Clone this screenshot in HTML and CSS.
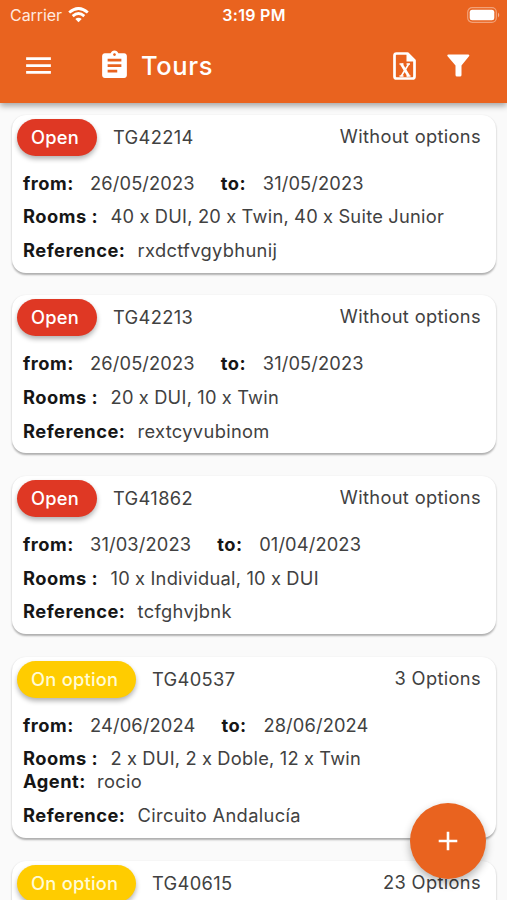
FILE: index.html
```html
<!DOCTYPE html>
<html lang="en">
<head>
<meta charset="utf-8">
<title>Tours</title>
<link rel="stylesheet" href="styles.css">
</head>
<body>
<div class="screen">
  <header class="top">
    <div class="status">
      <div class="carrier"><span>Carrier</span>
        <svg class="wifi" width="21" height="16" viewBox="0 0 21 16" fill="none" stroke="#fff" stroke-width="2.8"><path d="M1.200 5.500Q10.500-2.600 19.800 5.500M4.700 9.100Q10.500 4 16.300 9.100"/><path d="M10.500 15.200L7.300 12Q10.500 9.500 13.700 12Z" fill="#fff" stroke="none"/></svg>
      </div>
      <span class="time">3:19 PM</span>
      <svg class="battery" width="33" height="16" viewBox="0 0 33 16"><rect x=".7" y=".7" width="28.600" height="14.600" rx="4.500" fill="none" stroke="#fff" stroke-opacity=".4" stroke-width="1.200"/><rect x="2.700" y="2.700" width="24.600" height="10.600" rx="2.500" fill="#fff"/><path d="M31 5.500Q33.500 8 31 10.500Z" fill="#fff" fill-opacity=".5"/></svg>
    </div>
    <div class="bar">
      <svg class="menu" width="33" height="33" viewBox="0 0 24 24" fill="#fff"><path d="M3 18h18v-2H3v2zm0-5h18v-2H3v2zm0-7v2h18V6H3z"/></svg>
      <svg class="clip" width="33" height="33" viewBox="0 0 24 24" fill="#fff"><path d="M19 3h-4.180C14.400 1.840 13.300 1 12 1c-1.300 0-2.400.84-2.820 2H5c-1.100 0-2 .9-2 2v14c0 1.100.9 2 2 2h14c1.100 0 2-.9 2-2V5c0-1.100-.9-2-2-2zm-7 0c.55 0 1 .45 1 1s-.45 1-1 1-1-.45-1-1 .45-1 1-1zm2 14H7v-2h7v2zm3-4H7v-2h10v2zm0-4H7V7h10v2z"/></svg>
      <h1>Tours</h1>
      <svg class="excel" width="23" height="28" viewBox="0 0 23 28"><path d="M3.500 1.500H14.500L21.500 8.500V24.500Q21.500 26.500 19.500 26.500H3.500Q1.500 26.500 1.500 24.500V3.500Q1.500 1.500 3.500 1.500Z" fill="none" stroke="#fff" stroke-width="2.700" stroke-linejoin="round"/><path d="M13.500 1.500V9.500H21.500Z" fill="#fff"/><path d="M8.300 12L15.700 24" stroke="#fff" stroke-width="2.700"/><path d="M15.700 12L8.300 24" stroke="#fff" stroke-width="1.600"/><path d="M6.500 12H10.500M13.500 12H17M6.500 24H10.500M13.500 24H17.500" stroke="#fff" stroke-width="1.400"/></svg>
      <svg class="filter" width="23" height="23" viewBox="0 0 23 23"><path d="M1.500.5H21Q23 .7 22 2.300L14.500 11.500V21Q14.500 22.500 13 22.500H10Q8.500 22.500 8.500 21V11.500L.6 2.300Q-.3.7 1.500.5Z" fill="#fff"/></svg>
    </div>
  </header>
  <main class="list">
    <article class="card">
      <div class="head"><span class="pill open">Open</span><span class="code">TG42214</span><span class="opts">Without options</span></div>
      <div class="row dates"><b class="from">from:</b><span class="date">26/05/2023</span><b class="to">to:</b><span>31/05/2023</span></div>
      <div class="row"><b class="rooms">Rooms :</b><span class="list-text">40 x DUI, 20 x Twin, 40 x Suite Junior</span></div>
      <div class="row"><b class="ref">Reference:</b><span>rxdctfvgybhunij</span></div>
    </article>
    <article class="card">
      <div class="head"><span class="pill open">Open</span><span class="code">TG42213</span><span class="opts">Without options</span></div>
      <div class="row dates"><b class="from">from:</b><span class="date">26/05/2023</span><b class="to">to:</b><span>31/05/2023</span></div>
      <div class="row"><b class="rooms">Rooms :</b><span class="list-text">20 x DUI, 10 x Twin</span></div>
      <div class="row"><b class="ref">Reference:</b><span>rextcyvubinom</span></div>
    </article>
    <article class="card">
      <div class="head"><span class="pill open">Open</span><span class="code">TG41862</span><span class="opts">Without options</span></div>
      <div class="row dates"><b class="from">from:</b><span class="date">31/03/2023</span><b class="to">to:</b><span>01/04/2023</span></div>
      <div class="row"><b class="rooms">Rooms :</b><span class="list-text">10 x Individual, 10 x DUI</span></div>
      <div class="row"><b class="ref">Reference:</b><span>tcfghvjbnk</span></div>
    </article>
    <article class="card">
      <div class="head"><span class="pill option">On option</span><span class="code">TG40537</span><span class="opts">3 Options</span></div>
      <div class="row dates"><b class="from">from:</b><span class="date">24/06/2024</span><b class="to">to:</b><span>28/06/2024</span></div>
      <div class="row"><b class="rooms">Rooms :</b><span class="list-text">2 x DUI, 2 x Doble, 12 x Twin</span></div>
      <div class="row tight"><b class="agent">Agent:</b><span>rocio</span></div>
      <div class="row"><b class="ref">Reference:</b><span>Circuito Andalucía</span></div>
    </article>
    <article class="card">
      <div class="head"><span class="pill option">On option</span><span class="code">TG40615</span><span class="opts">23 Options</span></div>
    </article>
  </main>
  <button class="fab" aria-label="Add"><svg width="20" height="20" viewBox="0 0 20 20"><path d="M10 .7V19.300M.7 10H19.300" stroke="#fff" stroke-width="2.600"/></svg></button>
</div>
</body>
</html>
```
FILE: styles.css
```css
* { box-sizing: border-box; }
body { margin: 0; background: #fafafa; font-family: Inter, "Liberation Sans", sans-serif; }
.screen { position: relative; height: 900px; overflow: hidden; display: flex; flex-direction: column; }
.top { flex: none; height: 103px; background: #e9631f; color: #fff; box-shadow: 0 3px 6px rgba(0,0,0,.34); z-index: 1; }
.status { height: 28px; padding: 2px 9px 0 10px; display: grid; grid-template-columns: 1fr auto 1fr; align-items: center; font-size: 16px; line-height: 26px; }
.carrier { display: flex; align-items: center; gap: 6px; color: #ffe9df; letter-spacing: -.05px; }
.time { font-weight: 600; letter-spacing: .3px; }
.battery { justify-self: end; margin-right: -2px; }
.bar { height: 75px; display: flex; align-items: center; padding: 0 37px 0 22px; }
.clip { margin-left: 43px; }
h1 { margin: 0 auto 0 10px; font-size: 25.500px; font-weight: 550; line-height: 32px; letter-spacing: .6px; }
.filter { margin-left: 31px; }
.list { padding: 11.500px 11px 0 12px; display: flex; flex-direction: column; gap: 22.500px; }
.card { flex: none; height: 158.200px; background: #fff; border-radius: 14px; box-shadow: 0 1.500px 2px rgba(0,0,0,.3); color: #414141; font-size: 18.300px; line-height: 22.500px; letter-spacing: .34px; white-space: nowrap; }
.card:nth-child(4) { height: 181.600px; }
.head { height: 57px; padding: 4px 15px 0 5px; display: flex; align-items: flex-start; }
.pill { height: 37px; border-radius: 19px; padding: 0 18px 0 14px; line-height: 36px; color: #fff; font-weight: 500; letter-spacing: .25px; box-shadow: 0 3px 5px rgba(0,0,0,.3); }
.open { background: #df3824; width: 80px; }
.option { background: #fc0; width: 119px; color: #fffbd5; }
.code { margin-left: 16px; line-height: 37px; }
.opts { margin-left: auto; line-height: 34px; }
.row { padding-left: 11px; margin-bottom: 11.200px; display: flex; }
.row b { font-weight: 650; letter-spacing: .5px; color: #161616; }
.from { width: 67px; }
.date { margin-right: 26px; }
.dates { letter-spacing: .13px; }
.to { width: 42px; }
.rooms { width: 87.500px; }
.list-text { letter-spacing: .26px; word-spacing: -.3px; }
.ref { width: 114.500px; }
.agent { width: 74px; }
.row:has(+ .tight) { margin-bottom: .5px; }
.fab { position: absolute; left: 409.500px; top: 802.500px; width: 76px; height: 76px; border: 0; border-radius: 50%; background: #e9631f; display: grid; place-items: center; padding: 0; box-shadow: 0 4px 8px rgba(0,0,0,.3); z-index: 2; }
```
